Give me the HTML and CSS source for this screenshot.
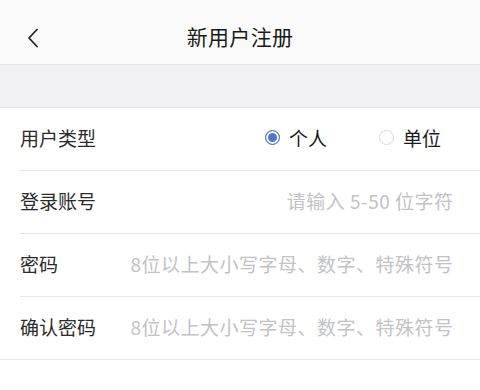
FILE: index.html
```html
<!DOCTYPE html>
<html lang="zh">
<head>
<meta charset="utf-8">
<link rel="stylesheet" href="styles.css">
</head>
<body>
<div class="header">
  <svg class="back" width="12" height="20" viewBox="0 0 12 20"><path d="M10 1.5 L2 10 L10 18.5" fill="none" stroke="#222" stroke-width="1.8" stroke-linecap="round" stroke-linejoin="round"/></svg>
  <div class="title">新用户注册</div>
</div>
<div class="band"></div>
<div class="form">
  <div class="row">
    <div class="label">用户类型</div>
    <div class="radios">
      <div class="radio"><span class="dot on"></span><span>个人</span></div>
      <div class="radio"><span class="dot"></span><span>单位</span></div>
    </div>
  </div>
  <div class="row">
    <div class="label">登录账号</div>
    <div class="ph">请输入 5-50 位字符</div>
  </div>
  <div class="row">
    <div class="label">密码</div>
    <div class="ph">8位以上大小写字母、数字、特殊符号</div>
  </div>
  <div class="row last">
    <div class="label">确认密码</div>
    <div class="ph">8位以上大小写字母、数字、特殊符号</div>
  </div>
</div>
</body>
</html>
```
FILE: styles.css
```css
html, body {
  margin: 0;
  padding: 0;
  background: #fff;
  font-family: "Noto Sans CJK SC", "Noto Sans", sans-serif;
}
.header {
  position: relative;
  height: 64px;
  background: #fafafa;
  border-bottom: 1px solid #e2e2e4;
  display: flex;
  align-items: center;
  justify-content: center;
}
.back {
  position: absolute;
  left: 27px;
  top: 28px;
}
.title {
  font-size: 21px;
  color: #1a1a1a;
  margin-top: 8px;
  letter-spacing: 0.3px;
}
.band {
  height: 42px;
  background: #f2f2f5;
  border-bottom: 1px solid #e3e3e5;
}
.form {
  padding-left: 20px;
}
.row {
  height: 62px;
  border-bottom: 1px solid #e6e6e8;
  display: flex;
  align-items: center;
  justify-content: space-between;
  padding-right: 27px;
}
.row.last {
  margin-left: -20px;
  padding-left: 20px;
}
.label {
  font-size: 19px;
  color: #2b2b2b;
  margin-top: -3px;
}
.ph {
  font-size: 19px;
  letter-spacing: 0.5px;
  margin-right: -0.5px;
  color: #c2c2c4;
  margin-top: -3px;
}
.radios {
  display: flex;
  gap: 52px;
  padding-right: 12px;
  margin-top: -3px;
}
.radio {
  display: flex;
  align-items: center;
  gap: 9px;
  font-size: 19px;
  color: #1a1a1a;
}
.dot {
  box-sizing: border-box;
  width: 15px;
  height: 15px;
  border-radius: 50%;
  border: 1px solid #d8d8da;
  background: #fff;
}
.dot.on {
  border: 1.5px solid #4a72cc;
  background: #4e78d4;
  box-shadow: inset 0 0 0 2px #fff;
}
```
